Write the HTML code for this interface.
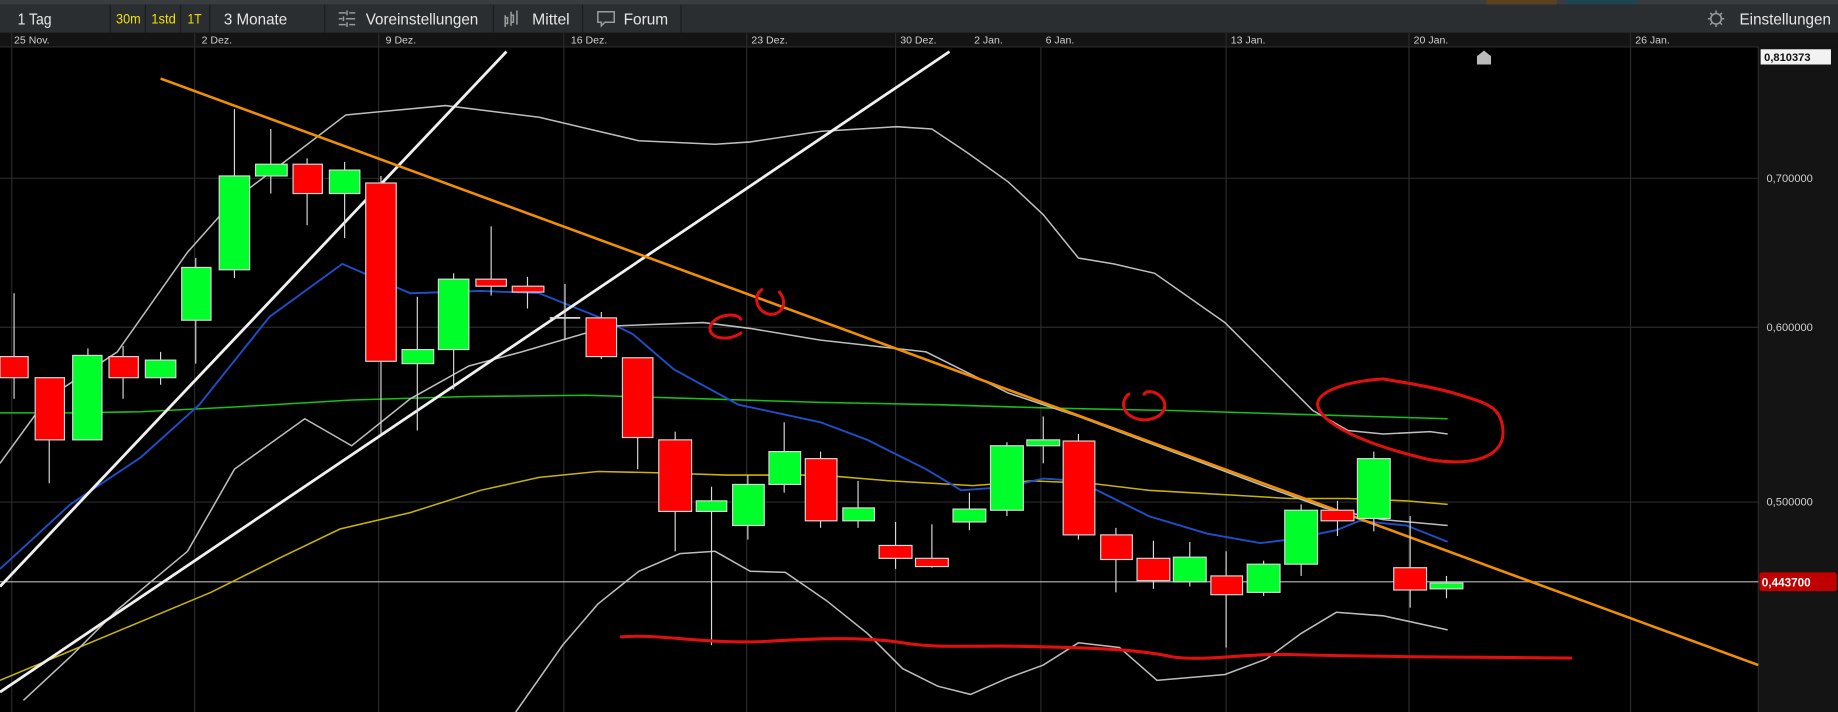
<!DOCTYPE html>
<html><head><meta charset="utf-8"><style>
html,body{margin:0;padding:0;background:#000;width:1838px;height:712px;overflow:hidden}
svg{display:block}
text{font-family:"Liberation Sans",sans-serif}
</style></head><body>
<svg width="1838" height="712" viewBox="0 0 1568 607" preserveAspectRatio="none" xmlns="http://www.w3.org/2000/svg">
<rect x="0" y="0" width="1568" height="607" fill="#000"/>
<!-- top strip -->
<rect x="0" y="0" width="1568" height="4" fill="#3a3d40"/>
<rect x="1268" y="0" width="60" height="4" fill="#5a4220"/>
<rect x="1336" y="0" width="60" height="4" fill="#1f4650"/>
<!-- toolbar -->
<rect x="0" y="4" width="1568" height="24" fill="#2b2e31"/>
<g stroke="#1a1c1e" stroke-width="1">
<line x1="94" y1="4" x2="94" y2="28"/><line x1="124" y1="4" x2="124" y2="28"/><line x1="154" y1="4" x2="154" y2="28"/><line x1="179" y1="4" x2="179" y2="28"/><line x1="277" y1="4" x2="277" y2="28"/><line x1="421" y1="4" x2="421" y2="28"/><line x1="497" y1="4" x2="497" y2="28"/><line x1="581" y1="4" x2="581" y2="28"/>
</g>
<g font-size="13" fill="#e6e6e6">
<text x="15" y="21" textLength="29" lengthAdjust="spacingAndGlyphs">1 Tag</text>
<text x="191" y="21" textLength="54" lengthAdjust="spacingAndGlyphs">3 Monate</text>
<text x="312" y="21" textLength="96" lengthAdjust="spacingAndGlyphs">Voreinstellungen</text>
<text x="454" y="21" textLength="32" lengthAdjust="spacingAndGlyphs">Mittel</text>
<text x="532" y="21" textLength="38" lengthAdjust="spacingAndGlyphs">Forum</text>
<text x="1484" y="21">Einstellungen</text>
</g>
<g font-size="12" fill="#f0e000">
<text x="99" y="20" textLength="21" lengthAdjust="spacingAndGlyphs">30m</text><text x="129" y="20" textLength="21" lengthAdjust="spacingAndGlyphs">1std</text><text x="160" y="20" textLength="12" lengthAdjust="spacingAndGlyphs">1T</text>
</g>
<!-- icons -->
<g stroke="#9a9a9a" stroke-width="1.3" fill="none">
<path d="M289 11h6M298 11h5M289 16h3M295 16h8M289 21h6M298 21h5M296 9v4M293 14v4M296 19v4"/>
<path d="M431 13v10M431 15h2v5h-2M436 10v12M436 13h2v6h-2M441 9v12"/>
<path d="M510 10h14v9h-8l-3 3v-3h-3z"/>
<circle cx="1464" cy="16" r="4.5"/><path d="M1457 16h2M1469 16h2M1464 9v2M1464 21v2M1459 11l1.5 1.5M1469 11l-1.5 1.5M1459 21l1.5-1.5M1469 21l-1.5-1.5"/>
</g>
<!-- date row -->
<rect x="0" y="28" width="1568" height="12" fill="#141414"/>
<line x1="0" y1="40" x2="1500" y2="40" stroke="#2a2a2a"/>
<g font-size="9" fill="#cfcfcf">
<text x="12" y="37">25 Nov.</text><text x="172" y="37">2 Dez.</text><text x="329" y="37">9 Dez.</text><text x="487" y="37">16 Dez.</text><text x="641" y="37">23 Dez.</text><text x="768" y="37">30 Dez.</text><text x="831" y="37">2 Jan.</text><text x="892" y="37">6 Jan.</text><text x="1050" y="37">13 Jan.</text><text x="1206" y="37">20 Jan.</text><text x="1395" y="37">26 Jan.</text>
</g>
<!-- grid -->
<g stroke="#2a2a2a" stroke-width="1">
<line x1="10" y1="28" x2="10" y2="607"/><line x1="166" y1="28" x2="166" y2="607"/><line x1="323" y1="28" x2="323" y2="607"/><line x1="481" y1="28" x2="481" y2="607"/><line x1="637" y1="28" x2="637" y2="607"/><line x1="764" y1="28" x2="764" y2="607"/><line x1="888" y1="40" x2="888" y2="607"/><line x1="1046" y1="28" x2="1046" y2="607"/><line x1="1202" y1="28" x2="1202" y2="607"/><line x1="1391" y1="28" x2="1391" y2="607"/>
<line x1="0" y1="152" x2="1500" y2="152"/><line x1="0" y1="279" x2="1500" y2="279"/><line x1="0" y1="428" x2="1500" y2="428"/>
</g>
<!-- axis -->
<rect x="1500" y="40" width="68" height="567" fill="#141414"/>
<line x1="1500" y1="40" x2="1500" y2="607" stroke="#2e2e2e"/>
<g font-size="9.5" fill="#d0d0d0">
<text x="1507" y="155">0,700000</text><text x="1507" y="282">0,600000</text><text x="1507" y="431">0,500000</text>
</g>
<rect x="1502" y="42" width="60" height="13" fill="#f2f2f2"/>
<text x="1505" y="52" font-size="9.5" fill="#111" font-weight="bold">0,810373</text>
<rect x="1501" y="488" width="66" height="16" rx="2" fill="#c00000"/>
<text x="1503" y="500" font-size="10" fill="#fff" font-weight="bold">0,443700</text>
<path d="M1260 55v-7l6-5 6 5v7z" fill="#bbb"/>
<line x1="0" y1="496" x2="1500" y2="496" stroke="#bbb" stroke-width="1"/>
<!-- indicator lines -->
<g fill="none" stroke-width="1.3">
<polyline stroke="#18c018" points="0,352 60,352 120,351 200,347 300,341 400,338 500,337 600,340 700,343 800,345 900,348 1000,350 1100,353 1235,357"/>
<polyline stroke="#c8b400" points="0,580 60,555 120,530 180,505 240,475 290,451 350,437 410,418 460,407 510,402 560,403 620,405 700,405 760,410 830,414 880,410 930,412 980,418 1050,422 1100,425 1150,425 1200,427 1235,430"/>
<polyline stroke="#1f4fc8" stroke-width="1.6" points="0,485 60,430 120,390 170,345 230,270 292,225 350,250 410,248 460,250 510,270 540,285 575,315 630,345 700,360 740,375 790,400 820,418 860,415 890,408 920,410 950,425 980,440 1030,455 1075,463 1100,460 1140,452 1160,444 1200,448 1235,462"/>
<polyline stroke="#bdbdbd" points="0,395 40,340 100,300 160,215 200,170 240,140 295,98 380,90 460,100 545,120 610,123 640,121 700,112 765,108 795,110 825,130 860,155 890,183 920,220 950,225 985,233 1045,275 1090,320 1120,350 1150,367 1180,370 1220,368 1235,370"/>
<polyline stroke="#bdbdbd" points="20,597 60,560 100,520 160,470 200,400 260,357 300,380 350,340 400,312 445,300 520,278 600,275 640,280 700,290 790,300 860,335 920,355 1000,385 1080,415 1130,433 1180,443 1235,448"/>
<polyline stroke="#bdbdbd" points="440,607 480,550 510,515 545,487 580,472 610,470 640,487 670,488 705,512 740,540 770,570 800,585 828,592 860,578 890,567 920,548 955,552 987,580 1045,575 1080,562 1110,540 1140,522 1180,525 1235,537"/>
</g>
<!-- trend lines -->
<g stroke="#f0f0f0" stroke-width="2.4"><line x1="0" y1="500" x2="432" y2="44"/><line x1="0" y1="590" x2="810" y2="44"/></g>
<line x1="137" y1="67" x2="1500" y2="567" stroke="#f09000" stroke-width="2.2"/>
<!-- candles -->
<g stroke="#d8d8d8" stroke-width="1">
<g>
<line x1="12" y1="250" x2="12" y2="340"/><line x1="42" y1="322" x2="42" y2="412"/><line x1="75" y1="297" x2="75" y2="375"/><line x1="105" y1="295" x2="105" y2="340"/><line x1="137" y1="300" x2="137" y2="328"/><line x1="167" y1="220" x2="167" y2="310"/><line x1="200" y1="93" x2="200" y2="237"/><line x1="231" y1="110" x2="231" y2="165"/><line x1="262" y1="135" x2="262" y2="192"/><line x1="294" y1="138" x2="294" y2="203"/><line x1="325" y1="150" x2="325" y2="370"/><line x1="356" y1="253" x2="356" y2="367"/><line x1="387" y1="233" x2="387" y2="332"/><line x1="419" y1="193" x2="419" y2="252"/><line x1="450" y1="236" x2="450" y2="263"/><line x1="482" y1="242" x2="482" y2="290"/><line x1="513" y1="266" x2="513" y2="306"/><line x1="544" y1="305" x2="544" y2="400"/><line x1="576" y1="368" x2="576" y2="470"/><line x1="607" y1="415" x2="607" y2="550"/><line x1="638" y1="405" x2="638" y2="460"/><line x1="669" y1="360" x2="669" y2="420"/><line x1="700" y1="385" x2="700" y2="450"/><line x1="732" y1="410" x2="732" y2="450"/><line x1="764" y1="445" x2="764" y2="485"/><line x1="795" y1="447" x2="795" y2="484"/><line x1="827" y1="420" x2="827" y2="452"/><line x1="859" y1="377" x2="859" y2="440"/><line x1="890" y1="355" x2="890" y2="395"/><line x1="920" y1="370" x2="920" y2="460"/><line x1="952" y1="450" x2="952" y2="505"/><line x1="984" y1="461" x2="984" y2="502"/><line x1="1015" y1="462" x2="1015" y2="500"/><line x1="1046" y1="470" x2="1046" y2="552"/><line x1="1078" y1="478" x2="1078" y2="508"/><line x1="1110" y1="430" x2="1110" y2="491"/><line x1="1141" y1="427" x2="1141" y2="457"/><line x1="1172" y1="385" x2="1172" y2="453"/><line x1="1203" y1="440" x2="1203" y2="518"/><line x1="1234" y1="491" x2="1234" y2="510"/>
</g>
<g fill="#ff0000">
<rect x="0" y="304" width="24" height="18"/><rect x="30" y="322" width="25" height="53"/><rect x="93" y="304" width="25" height="18"/><rect x="250" y="140" width="25" height="25"/><rect x="312" y="156" width="26" height="152"/><rect x="406" y="238" width="26" height="6"/><rect x="437" y="244" width="27" height="5"/><rect x="500" y="271" width="26" height="33"/><rect x="531" y="305" width="26" height="68"/><rect x="562" y="375" width="28" height="61"/><rect x="687" y="391" width="27" height="53"/><rect x="750" y="465" width="28" height="11"/><rect x="781" y="476" width="28" height="7"/><rect x="907" y="376" width="27" height="80"/><rect x="939" y="456" width="27" height="21"/><rect x="970" y="476" width="28" height="19"/><rect x="1033" y="491" width="27" height="16"/><rect x="1127" y="435" width="28" height="9"/><rect x="1189" y="484" width="28" height="19"/>
</g>
<g fill="#00ff2a">
<rect x="62" y="303" width="25" height="72"/><rect x="124" y="307" width="26" height="15"/><rect x="155" y="228" width="25" height="45"/><rect x="187" y="150" width="26" height="80"/><rect x="218" y="140" width="27" height="10"/><rect x="281" y="145" width="26" height="20"/><rect x="343" y="298" width="27" height="12"/><rect x="374" y="238" width="26" height="60"/><rect x="594" y="427" width="26" height="9"/><rect x="625" y="413" width="27" height="35"/><rect x="656" y="385" width="27" height="28"/><rect x="719" y="433" width="27" height="11"/><rect x="813" y="434" width="28" height="11"/><rect x="845" y="380" width="28" height="55"/><rect x="876" y="375" width="28" height="5"/><rect x="1001" y="475" width="28" height="21"/><rect x="1064" y="481" width="28" height="24"/><rect x="1096" y="435" width="28" height="46"/><rect x="1158" y="391" width="28" height="51"/><rect x="1220" y="497" width="28" height="5"/>
</g>
<line x1="469" y1="271" x2="495" y2="271" stroke-width="1.5"/>
</g>
<!-- red drawings -->
<g fill="none" stroke="#e01010" stroke-width="2.6" stroke-linecap="round">
<path d="M530 543 C560 540 600 549 650 547 C700 544 740 543 770 548 C800 553 830 550 870 551 C920 552 970 553 1000 560 C1030 564 1060 557 1100 558 C1160 560 1250 560 1340 561"/>
<path d="M632 272 C628 266 610 268 606 278 C603 288 620 292 632 284"/>
<path d="M650 247 C642 252 645 266 657 268 C668 268 672 258 665 249"/>
<path d="M963 336 C955 342 957 356 975 358 C993 358 998 345 990 338 C985 333 978 333 976 336"/>
<path d="M1180 323 C1150 325 1124 333 1124 345 C1126 360 1160 378 1220 392 C1260 398 1285 388 1282 365 C1280 345 1265 343 1240 335 C1215 328 1195 326 1180 323"/>
</g>
</svg>
</body></html>
